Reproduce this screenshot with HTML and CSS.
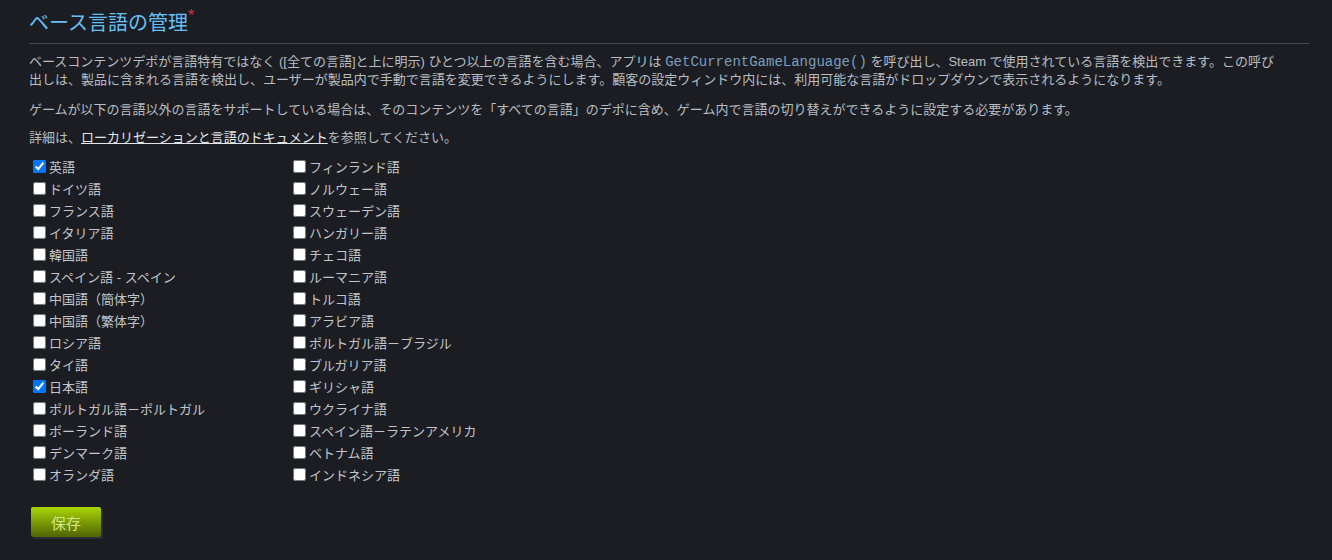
FILE: index.html
```html
<!DOCTYPE html>
<html>
<head>
<meta name="viewport" content="width=device-width, initial-scale=1">
<link rel="stylesheet" href="styles.css">
</head>
<body>

<form id="lang-form">
  <div class="container">
    <h1>ベース言語の管理<span class="req">*</span></h1>

    <p class="intro">ベースコンテンツデポが言語特有ではなく ([全ての言語]と上に明示) ひとつ以上の言語を含む場合、アプリは <code>GetCurrentGameLanguage()</code> を呼び出し、Steam で使用されている言語を検出できます。この呼び出しは、製品に含まれる言語を検出し、ユーザーが製品内で手動で言語を変更できるようにします。顧客の設定ウィンドウ内には、利用可能な言語がドロップダウンで表示されるようになります。</p>
    <p>ゲームが以下の言語以外の言語をサポートしている場合は、そのコンテンツを「すべての言語」のデポに含め、ゲーム内で言語の切り替えができるように設定する必要があります。</p>
    <p class="note">詳細は、<a href="#">ローカリゼーションと言語のドキュメント</a>を参照してください。</p>

    <div class="langs">
      <div class="col">
        <label><input type="checkbox" name="english" checked>英語</label>
        <label><input type="checkbox" name="german">ドイツ語</label>
        <label><input type="checkbox" name="french">フランス語</label>
        <label><input type="checkbox" name="italian">イタリア語</label>
        <label><input type="checkbox" name="koreana">韓国語</label>
        <label><input type="checkbox" name="spanish">スペイン語 - スペイン</label>
        <label><input type="checkbox" name="schinese">中国語（簡体字）</label>
        <label><input type="checkbox" name="tchinese">中国語（繁体字）</label>
        <label><input type="checkbox" name="russian">ロシア語</label>
        <label><input type="checkbox" name="thai">タイ語</label>
        <label><input type="checkbox" name="japanese" checked>日本語</label>
        <label><input type="checkbox" name="portuguese">ポルトガル語－ポルトガル</label>
        <label><input type="checkbox" name="polish">ポーランド語</label>
        <label><input type="checkbox" name="danish">デンマーク語</label>
        <label><input type="checkbox" name="dutch">オランダ語</label>
      </div>
      <div class="col">
        <label><input type="checkbox" name="finnish">フィンランド語</label>
        <label><input type="checkbox" name="norwegian">ノルウェー語</label>
        <label><input type="checkbox" name="swedish">スウェーデン語</label>
        <label><input type="checkbox" name="hungarian">ハンガリー語</label>
        <label><input type="checkbox" name="czech">チェコ語</label>
        <label><input type="checkbox" name="romanian">ルーマニア語</label>
        <label><input type="checkbox" name="turkish">トルコ語</label>
        <label><input type="checkbox" name="arabic">アラビア語</label>
        <label><input type="checkbox" name="brazilian">ポルトガル語－ブラジル</label>
        <label><input type="checkbox" name="bulgarian">ブルガリア語</label>
        <label><input type="checkbox" name="greek">ギリシャ語</label>
        <label><input type="checkbox" name="ukrainian">ウクライナ語</label>
        <label><input type="checkbox" name="latam">スペイン語－ラテンアメリカ</label>
        <label><input type="checkbox" name="vietnamese">ベトナム語</label>
        <label><input type="checkbox" name="indonesian">インドネシア語</label>
      </div>
    </div>

    <button type="submit" class="savebtn">保存</button>
  </div>
</form>

</body>
</html>
```

FILE: styles.css
```css
body {
  margin: 0;
  background-color: #1b1d23;
  font-family: "Liberation Sans", "Noto Sans CJK JP", sans-serif;
  font-size: 13px;
  color: #b8bdc2;
}

* {
  box-sizing: border-box;
}

.container {
  padding: 9px 23px 20px 29px;
}

h1 {
  margin: 0 0 9px 0;
  padding-bottom: 5px;
  border-bottom: 1px solid #46484d;
  font-size: 20px;
  font-weight: normal;
  line-height: 29px;
  color: #66c0f4;
}

.req {
  color: #d9303a;
  font-size: 16px;
  vertical-align: top;
  line-height: 14px;
}

p {
  margin: 0 0 10px 0;
  line-height: 18px;
  max-width: 1256px;
}

.intro {
  margin-bottom: 12px;
}

.note {
  margin-bottom: 8px;
}

code {
  font-family: "Liberation Mono", monospace;
  font-size: 14px;
  line-height: 16px;
  color: #7d9dbd;
}

a {
  color: #e2e6e9;
  text-decoration: underline;
}

/* two columns of language checkboxes */
.langs {
  display: flex;
}

.col {
  width: 260px;
  display: flex;
  flex-direction: column;
}

.col label {
  display: flex;
  align-items: center;
  height: 22px;
  color: #c2c6ca;
}

.col input[type=checkbox] {
  margin: 0 3px 0 4px;
  width: 13px;
  height: 13px;
}

.savebtn {
  margin: 22px 0 0 2px;
  width: 70px;
  height: 30px;
  border: none;
  border-radius: 2px;
  background: linear-gradient(to bottom, #a4d007 5%, #536904 95%);
  box-shadow: 2px 2px 0 #2a2e36;
  color: #d2e885;
  font-family: "Liberation Sans", "Noto Sans CJK JP", sans-serif;
  font-size: 15px;
  cursor: pointer;
}
```
